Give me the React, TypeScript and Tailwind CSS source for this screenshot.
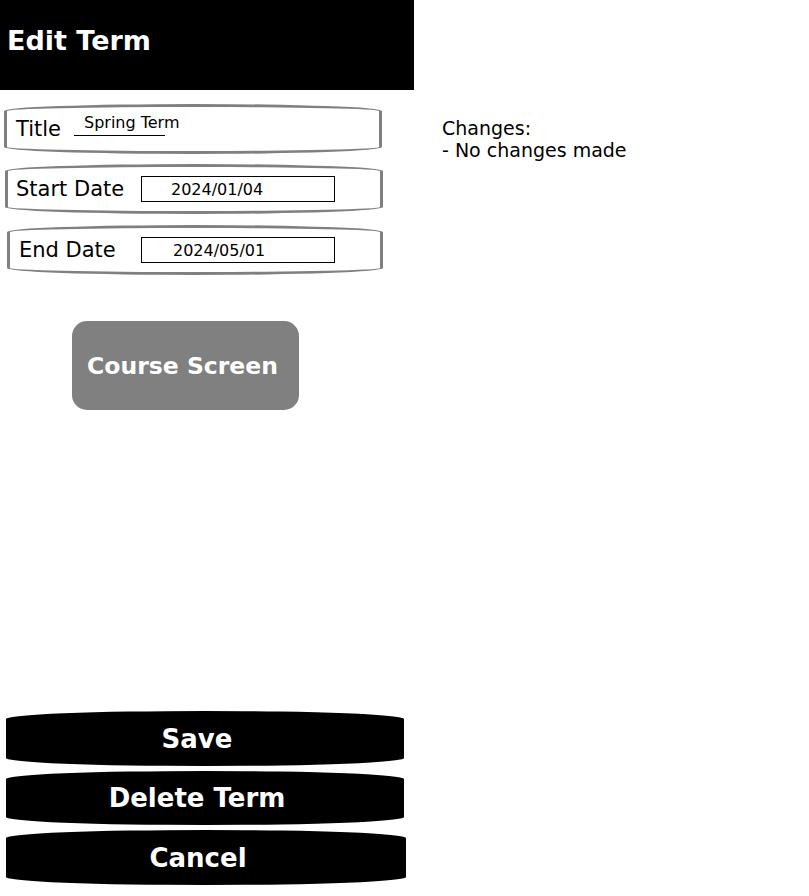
import React from "react";

const font = { fontFamily: '"DejaVu Sans", Verdana, sans-serif' };

function Field({
  children,
  className,
}: {
  children: React.ReactNode;
  className: string;
}) {
  return (
    <div
      className={`flex h-[50px] items-center border-[3px] border-[#808080] rounded-[50%/7px] bg-white ${className}`}
    >
      {children}
    </div>
  );
}

function BigButton({ label, className }: { label: string; className: string }) {
  return (
    <div
      className={`flex items-center justify-center bg-black rounded-[50%/8px] pr-[16px] text-[26px] leading-[30px] font-bold text-white ${className}`}
    >
      {label}
    </div>
  );
}

export default function App() {
  return (
    <div className="flex h-[896px] w-[809px] bg-white text-black" style={font}>
      <div className="flex w-[414px] flex-col">
        <div className="h-[90px] bg-black pl-[7px] pt-[26px] text-[27px] font-bold leading-[30px] text-white">
          Edit Term
        </div>

        <Field className="mt-[14px] ml-[4px] w-[378px] pl-[9px]">
          <span className="w-[58px] text-[21px] leading-[24px]">Title</span>
          <div className="self-start mt-[6px] h-[23px] w-[91px] whitespace-nowrap border-b border-black pl-[10px] text-[16px] leading-[19px]">
            Spring Term
          </div>
        </Field>

        <Field className="mt-[10px] ml-[5px] w-[378px] pl-[8px]">
          <span className="w-[125px] text-[21px] leading-[24px]">Start Date</span>
          <div className="flex h-[26px] w-[194px] items-center border border-black pl-[29px] text-[16px] leading-[19px]">
            2024/01/04
          </div>
        </Field>

        <Field className="mt-[11px] ml-[7px] w-[376px] pl-[9px]">
          <span className="w-[122px] text-[21px] leading-[24px]">End Date</span>
          <div className="flex h-[26px] w-[194px] items-center border border-black pl-[31px] text-[16px] leading-[19px]">
            2024/05/01
          </div>
        </Field>

        <div className="mt-[46px] ml-[72px] flex h-[89px] w-[227px] items-center justify-center rounded-[15px] bg-[#808080] pr-[6px] text-[23.5px] font-bold leading-[28px] text-white">
          Course Screen
        </div>

        <div className="mt-auto flex flex-col gap-[5px] pb-[11px]">
          <BigButton label="Save" className="ml-[6px] h-[55px] w-[398px]" />
          <BigButton label="Delete Term" className="ml-[6px] h-[54px] w-[398px]" />
          <BigButton label="Cancel" className="ml-[6px] h-[55px] w-[400px]" />
        </div>
      </div>

      <div className="ml-[28px] mt-[117px] text-[19px] leading-[22px]">
        <div>Changes:</div>
        <div>- No changes made</div>
      </div>
    </div>
  );
}
